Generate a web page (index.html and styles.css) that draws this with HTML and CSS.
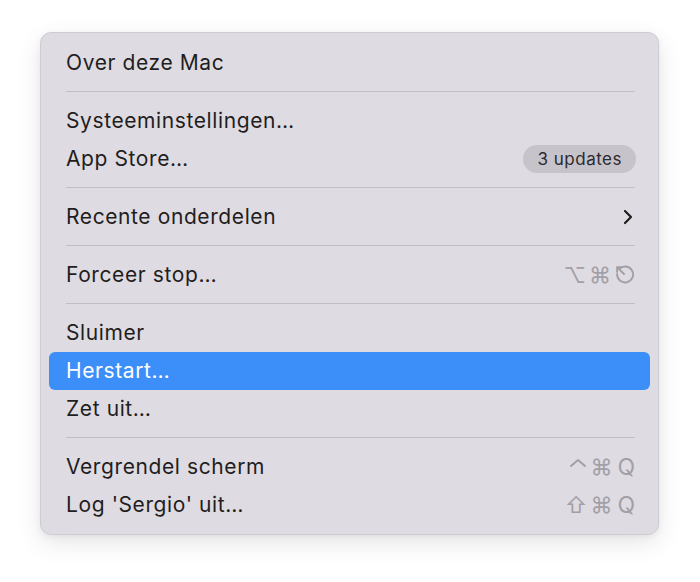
FILE: index.html
```html
<!DOCTYPE html>
<html lang="nl">
<head>
<meta charset="utf-8">
<link rel="stylesheet" href="styles.css">
</head>
<body>
<div class="menu">
  <div class="item"><span class="label">Over deze Mac</span></div>
  <div class="sep"></div>
  <div class="item"><span class="label">Systeeminstellingen…</span></div>
  <div class="item"><span class="label">App Store…</span><span class="badge">3 updates</span></div>
  <div class="sep"></div>
  <div class="item"><span class="label">Recente onderdelen</span>
    <svg class="chev" width="10" height="16" viewBox="0 0 10 16"><path d="M2 2 L8 8 L2 14" fill="none" stroke="#1e1e1e" stroke-width="2.2" stroke-linecap="round" stroke-linejoin="round"/></svg>
  </div>
  <div class="sep"></div>
  <div class="item"><span class="label">Forceer stop…</span>
    <span class="keys">
      <span class="k">⌥</span><span class="k">⌘</span>
      <svg class="esc" width="21" height="21" viewBox="0 0 20 20"><path d="M5.2 4.6 A7.6 7.6 0 1 1 3 9.5" fill="none" stroke="#a29fa6" stroke-width="1.8" stroke-linecap="round"/><path d="M3.2 3.2 L9.5 9.5" stroke="#a29fa6" stroke-width="1.8" stroke-linecap="round"/><path d="M3 3 L3 7.5 M3 3 L7.5 3" stroke="#a29fa6" stroke-width="1.8" stroke-linecap="round"/></svg>
    </span>
  </div>
  <div class="sep"></div>
  <div class="item"><span class="label">Sluimer</span></div>
  <div class="item active"><span class="label">Herstart…</span></div>
  <div class="item"><span class="label">Zet uit…</span></div>
  <div class="sep"></div>
  <div class="item"><span class="label">Vergrendel scherm</span>
    <span class="keys">
      <svg class="ctrl" width="18" height="20" viewBox="0 0 18 20"><path d="M2 9 L9 3 L16 9" fill="none" stroke="#a29fa6" stroke-width="2" stroke-linecap="round" stroke-linejoin="round"/></svg>
      <span class="k">⌘</span><span class="k q">Q</span>
    </span>
  </div>
  <div class="item"><span class="label">Log 'Sergio' uit…</span>
    <span class="keys"><span class="k">⇧</span><span class="k">⌘</span><span class="k q">Q</span></span>
  </div>
</div>
</body>
</html>
```
FILE: styles.css
```css
html, body {
  margin: 0;
  padding: 0;
  background: #ffffff;
}
body {
  width: 700px;
  height: 582px;
  font-family: Inter, "Noto Sans", sans-serif;
  -webkit-font-smoothing: antialiased;
}
.menu {
  margin: 32px 0 0 40px;
  width: 619px;
  box-sizing: border-box;
  padding: 11px 8px 10px;
  background: #dfdbe2;
  border-radius: 11px;
  border: 1px solid #cfcbd2;
  box-shadow: 0 8px 24px rgba(0,0,0,0.10), 0 2px 6px rgba(0,0,0,0.05);
}
.item {
  height: 38px;
  display: flex;
  align-items: center;
  justify-content: space-between;
  padding: 0 15px 1px 17px;
  border-radius: 6px;
  color: #1f1e21;
  font-size: 21px;
  letter-spacing: 0.6px;
  box-sizing: border-box;
}
.item.active {
  background: #3c8ef9;
  color: #ffffff;
}
.sep {
  height: 1px;
  background: #c2bec5;
  margin: 9px 15px 10px 17px;
}
.badge {
  background: #c7c3ca;
  color: #2c2a2e;
  font-size: 17px;
  letter-spacing: 0.5px;
  line-height: 20px;
  padding: 4px 14px 4px 15px;
  border-radius: 14px;
  margin-right: -1px;
}
.chev {
  margin-right: 2px;
}
.keys {
  display: flex;
  align-items: center;
  gap: 3px;
  color: #a29fa6;
  font-size: 22px;
  letter-spacing: 0;
}
.k {
  display: inline-block;
}
.q {
  font-size: 23px;
  margin-left: 2px;
}
.esc, .ctrl {
  display: block;
}
```
